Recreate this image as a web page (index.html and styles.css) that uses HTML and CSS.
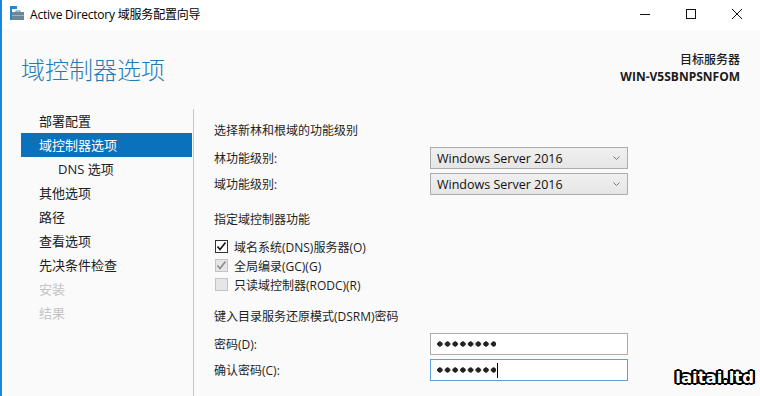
FILE: index.html
```html
<!DOCTYPE html>
<html lang="zh-CN">
  <head>
    <meta charset="UTF-8" />
    <title>Active Directory 域服务配置向导</title>
    <link rel="stylesheet" href="styles.css">
  </head>
  <body>
    <div class="window">
      <!-- 标题栏 -->
      <div class="titlebar">
        <svg class="app-icon" width="16" height="16" viewBox="0 0 16 16">
          <rect x="0" y="0" width="7" height="3" fill="#1b8ad9" />
          <rect x="0" y="0" width="2" height="14" fill="#1b8ad9" />
          <rect x="6" y="5" width="4" height="2" fill="none" stroke="#6b8797" stroke-width="1" />
          <rect x="2" y="6" width="12" height="8" fill="#6b8797" />
          <rect x="2" y="9" width="12" height="1" fill="#9fb3bd" />
        </svg>
        <span class="title">Active Directory 域服务配置向导</span>
        <div class="win-buttons">
          <div class="win-btn">
            <svg width="10" height="10" viewBox="0 0 10 10"><path d="M0 5.5H10" stroke="#111" stroke-width="1" /></svg>
          </div>
          <div class="win-btn">
            <svg width="10" height="10" viewBox="0 0 10 10"><rect x="0.5" y="0.5" width="9" height="9" fill="none" stroke="#111" stroke-width="1" /></svg>
          </div>
          <div class="win-btn">
            <svg width="10" height="10" viewBox="0 0 10 10"><path d="M0 0L10 10M10 0L0 10" stroke="#111" stroke-width="1" /></svg>
          </div>
        </div>
      </div>

      <!-- 页眉 -->
      <div class="header">
        <h1 class="page-title">域控制器选项</h1>
        <div class="target">
          <div class="target-label">目标服务器</div>
          <div class="target-name">WIN-V5SBNPSNFOM</div>
        </div>
      </div>

      <div class="main">
        <!-- 左侧导航 -->
        <ul class="nav">
          <li>部署配置</li>
          <li class="active">域控制器选项</li>
          <li class="sub">DNS 选项</li>
          <li>其他选项</li>
          <li>路径</li>
          <li>查看选项</li>
          <li>先决条件检查</li>
          <li class="disabled">安装</li>
          <li class="disabled">结果</li>
        </ul>

        <!-- 内容 -->
        <div class="content">
          <div class="section-title">选择新林和根域的功能级别</div>
          <div class="form-rows">
            <div class="form-row">
              <label>林功能级别:</label>
              <div class="select">
                <span>Windows Server 2016</span>
                <svg width="7" height="4" viewBox="0 0 7 4"><path d="M0.5 0.5L3.5 3.5L6.5 0.5" fill="none" stroke="#777" stroke-width="1" /></svg>
              </div>
            </div>
            <div class="form-row">
              <label>域功能级别:</label>
              <div class="select">
                <span>Windows Server 2016</span>
                <svg width="7" height="4" viewBox="0 0 7 4"><path d="M0.5 0.5L3.5 3.5L6.5 0.5" fill="none" stroke="#777" stroke-width="1" /></svg>
              </div>
            </div>
          </div>

          <div class="section-title second">指定域控制器功能</div>
          <div class="checks">
            <div class="check-row">
              <span class="box checked">
                <svg width="11" height="11" viewBox="0 0 11 11"><path d="M1.5 5.5L4 8.5L9.5 1.5" fill="none" stroke="#111" stroke-width="1.6" /></svg>
              </span>
              <span>域名系统(DNS)服务器(O)</span>
            </div>
            <div class="check-row">
              <span class="box dim">
                <svg width="11" height="11" viewBox="0 0 11 11"><path d="M1.5 5.5L4 8.5L9.5 1.5" fill="none" stroke="#8a8a8a" stroke-width="1.6" /></svg>
              </span>
              <span>全局编录(GC)(G)</span>
            </div>
            <div class="check-row">
              <span class="box dim"></span>
              <span>只读域控制器(RODC)(R)</span>
            </div>
          </div>

          <div class="section-title third">键入目录服务还原模式(DSRM)密码</div>
          <div class="form-rows">
            <div class="form-row">
              <label>密码(D):</label>
              <div class="password"><span class="dots"></span></div>
            </div>
            <div class="form-row">
              <label>确认密码(C):</label>
              <div class="password focused"><span class="dots"></span><span class="caret"></span></div>
            </div>
          </div>
        </div>
      </div>

      <div class="watermark">laitai.ltd</div>
    </div>
  </body>
</html>
```

FILE: styles.css
```css
* {
  margin: 0;
  padding: 0;
  box-sizing: border-box;
}

body {
  width: 760px;
  height: 396px;
  overflow: hidden;
  background: #fafafa;
  font-family: 'Open Sans', 'Noto Sans CJK SC', sans-serif;
  font-size: 12px;
  color: #1e1e1e;
}

.window {
  position: relative;
  height: 396px;
  border-left: 2px solid #1a86dc;
  display: flex;
  flex-direction: column;
}

/* 标题栏 */
.titlebar {
  height: 30px;
  background: #fff;
  display: flex;
  align-items: center;
  padding-left: 8px;
}

.app-icon {
  margin-top: -2px;
}

.title {
  margin-left: 4px;
  font-size: 12px;
  color: #000;
  margin-top: -2px;
  letter-spacing: -0.2px;
}

.win-buttons {
  margin-left: auto;
  display: flex;
  height: 100%;
}

.win-btn {
  width: 46px;
  display: flex;
  align-items: center;
  justify-content: center;
  margin-top: -2px;
}

/* 页眉 */
.header {
  height: 79px;
  display: flex;
  justify-content: space-between;
  align-items: flex-start;
  padding: 23px 20px 0 19px;
}

.page-title {
  font-size: 24px;
  line-height: 32px;
  font-weight: 300;
  color: #1f7cb4;
  font-family: 'Noto Sans CJK SC', sans-serif;
}

.target {
  margin-top: -1px;
  text-align: right;
  font-size: 12px;
  line-height: 16.5px;
  color: #1a1a1a;
}

.target-label {
  font-weight: 500;
}

.target-name {
  font-weight: 700;
}

/* 主体 */
.main {
  flex: 1;
  display: flex;
  min-height: 0;
}

.nav {
  list-style: none;
  margin-left: 19px;
  width: 173px;
  padding-right: 1px;
  border-right: 1px solid #c6c6c6;
  font-size: 13px;
}

.nav li {
  height: 24px;
  line-height: 24px;
  padding-left: 18px;
  color: #202020;
}

.nav li.active {
  background: #0a71bc;
  color: #fff;
}

.nav li.sub {
  padding-left: 37px;
}

.nav li.disabled {
  color: #c4c4c4;
}

.content {
  flex: 1;
  padding-left: 20px;
  padding-top: 14px;
}

.section-title {
  line-height: 16px;
}

.section-title.second {
  margin-top: 17px;
}

.section-title.third {
  margin-top: 15px;
}

.form-rows {
  margin-top: 8px;
  display: flex;
  flex-direction: column;
  gap: 4px;
}

.form-row {
  display: flex;
  align-items: center;
}

.form-row label {
  width: 216px;
}

.select {
  width: 198px;
  height: 22px;
  border: 1px solid #adadad;
  background: linear-gradient(#f0f0f0, #e6e6e6);
  display: flex;
  align-items: center;
  justify-content: space-between;
  padding: 0 6px 0 6px;
  font-size: 12.5px;
  color: #111;
}

.select svg {
  margin-right: 1px;
}

.checks {
  margin-top: 9px;
  display: flex;
  flex-direction: column;
}

.check-row {
  height: 19px;
  display: flex;
  align-items: center;
  gap: 6px;
  padding-left: 1px;
}

.box {
  width: 13px;
  height: 13px;
  border: 1px solid #333;
  background: #fff;
  display: flex;
  align-items: center;
  justify-content: center;
}

.box.dim {
  border-color: #c4c4c4;
  background: #e6e6e6;
}

.password {
  width: 198px;
  height: 22px;
  border: 1px solid #acacac;
  background: #fff;
  display: flex;
  align-items: center;
  padding-left: 5px;
}

.password.focused {
  border-color: #5a9fe0;
}

.dots {
  width: 60px;
  height: 6px;
  background: radial-gradient(circle, #222 2.4px, transparent 2.9px) 0 0 / 7.7px 6px repeat-x;
}

.caret {
  width: 1px;
  height: 15px;
  background: #000;
  margin-left: 1px;
}

/* 水印 */
.watermark {
  position: absolute;
  right: 6px;
  bottom: 9px;
  font-family: 'DejaVu Sans', sans-serif;
  font-weight: 700;
  font-size: 16.5px;
  color: #fff;
  text-shadow: -2px 0 #000, 2px 0 #000, 0 -2px #000, 0 2px #000,
    -1px -1px #000, 1px 1px #000, -1px 1px #000, 1px -1px #000,
    -2px -1px #000, 2px 1px #000, -2px 1px #000, 2px -1px #000;
}
```
